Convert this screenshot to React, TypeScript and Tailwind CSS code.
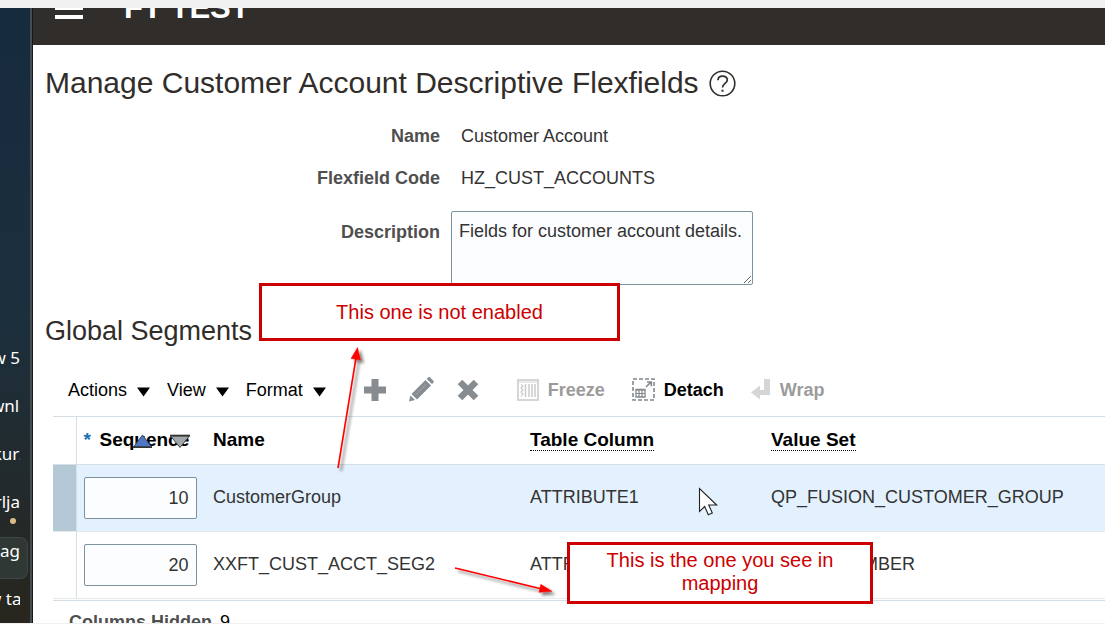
import { useState } from 'react';

const font = "font-['Liberation_Sans',Arial,sans-serif]";

const sideItems = [
  { label: 'ew 5', align: 'justify-end' },
  { label: 'ownloa', align: 'justify-center' },
  { label: 'kurz', align: 'justify-center' },
  { label: 'erlja', align: 'justify-end' },
];

const initialRows = [
  { seq: '10', name: 'CustomerGroup', column: 'ATTRIBUTE1', valueSet: 'QP_FUSION_CUSTOMER_GROUP' },
  { seq: '20', name: 'XXFT_CUST_ACCT_SEG2', column: 'ATTRIBUTE2', valueSet: 'FT_XX_NUMBER' },
];

const MenuButton = ({ label }: { label: string }) => (
  <button className="flex items-center gap-[10px] text-black">
    {label}
    <svg className="mt-1" width="13" height="10" viewBox="0 0 13 10">
      <path d="M0 0.5h13L6.5 9.5z" fill="#000" />
    </svg>
  </button>
);

const PlusIcon = () => (
  <svg width="22" height="22" viewBox="0 0 22 22">
    <path d="M7.5 0h7v7.5H22v7h-7.500V22h-7v-7.500H0v-7h7.500z" fill="#868c90" />
  </svg>
);

const PencilIcon = () => (
  <svg width="25" height="25" viewBox="0 0 25 25">
    <path d="M0 24.500l1.400-6 4.600 4.600z" fill="#868c90" />
    <path d="M2.500 17L16.500 3l5.500 5.500L8 22.500z" fill="#868c90" />
    <path d="M17.700 1.900L19.300.3q.8-.5 1.600 0l3.600 3.600q.6.800 0 1.600l-1.500 1.600z" fill="#868c90" />
    <path d="M7 17.500L17 7.500" stroke="#a4a9ac" strokeWidth="1" />
  </svg>
);

const DeleteIcon = () => (
  <svg width="22" height="22" viewBox="0 0 22 22">
    <path d="M3 3l16 16M19 3L3 19" stroke="#868c90" strokeWidth="6.500" />
  </svg>
);

const FreezeIcon = () => (
  <svg width="22" height="22" viewBox="0 0 22 22" fill="none">
    <path d="M1 1h20v20H1z" stroke="#d6d6d6" strokeWidth="2" />
    <path d="M2 3h18" stroke="#d6d6d6" />
    <path d="M4 5.500l2 1.500-2 2 2 2-2 2 2 2-2 2.500" stroke="#cacaca" strokeWidth="1.200" />
    <path d="M8.500 5v13M12 5v13M15 5v13M18 5v13" stroke="#cbcbcb" strokeWidth="1.500" />
  </svg>
);

const DetachIcon = () => (
  <svg width="23" height="23" viewBox="0 0 23 23" fill="none">
    <path d="M1 1h21v21H1z" stroke="#83898d" strokeWidth="1.600" strokeDasharray="4 2" />
    <path d="M4 11.500h9v7.500H4z" stroke="#83898d" strokeWidth="1.300" />
    <path d="M4 12h9M4 15.500h9M7 12v7M10 12v7" stroke="#83898d" strokeWidth="1.200" />
    <path d="M14 9l5-5M15 4h4.300v4.300" stroke="#83898d" strokeWidth="1.600" />
  </svg>
);

const WrapIcon = () => (
  <svg width="20" height="21" viewBox="0 0 20 21">
    <path d="M13 0h6v16H9v4.500L0 13.500 9 6.500V11h4z" fill="#d4d6d7" />
  </svg>
);

const HelpIcon = () => (
  <svg width="27" height="27" viewBox="0 0 27 27" fill="none" stroke="#312d2a">
    <circle cx="13.500" cy="13.500" r="12.300" strokeWidth="1.600" />
    <path d="M9 10.200c0-5.600 9.300-5.400 9.300-.3 0 3.600-4.800 3.400-4.800 7.600" strokeWidth="1.700" />
    <path d="M12.500 20.700h2" strokeWidth="2" />
  </svg>
);

const Sidebar = () => (
  <aside className="flex w-[33px] shrink-0 flex-col overflow-hidden border-r border-[#15191b] bg-linear-to-b from-[#172b3f] via-[#1b2f3d] to-[#28261e] font-['Noto_Sans',sans-serif] text-[17px] text-white">
    <div className="flex-1 border-r-2 border-[#454d50] pt-[326px]">
      {sideItems.map((item) => (
        <div key={item.label} className={`flex h-12 w-5 items-center overflow-hidden ${item.align}`}>
          <span className="whitespace-nowrap">{item.label}</span>
        </div>
      ))}
      <div className="relative w-7 pt-[11px]">
        <span className="absolute -top-2 left-[10px] size-[6px] rounded-full bg-[#d9bd84]" />
        <div className="h-[42px] rounded-r-lg border border-l-0 border-[#3f4644] bg-[#303836]">
          <div className="flex w-5 justify-end overflow-hidden leading-[26px]">
            <span>nag</span>
          </div>
        </div>
      </div>
      <div className="flex h-10 w-5 items-center justify-center overflow-hidden">
        <span className="whitespace-nowrap">w tab</span>
      </div>
    </div>
  </aside>
);

const SortButtons = () => (
  <span className="absolute top-[17px] left-[55px] flex gap-4">
    <button aria-label="Sort ascending">
      <svg width="21" height="15" viewBox="0 0 21 15">
        <path d="M10.500 1L19.500 13H1.500z" fill="#4f78c4" stroke="#3b4659" />
        <path d="M1 13.200h19" stroke="#333" strokeWidth="1.600" />
      </svg>
    </button>
    <button aria-label="Sort descending">
      <svg width="22" height="15" viewBox="0 0 22 15">
        <path d="M1.500 2h19L11 13.500z" fill="#a3a6a8" stroke="#444" />
        <path d="M1 1.500h20" stroke="#333" strokeWidth="1.600" />
      </svg>
    </button>
  </span>
);

const Annotations = () => (
  <>
    <svg className="pointer-events-none absolute top-0 left-0" width="760" height="624" viewBox="0 0 760 624">
      <defs>
        <filter id="shadow" x="-50%" y="-50%" width="200%" height="200%">
          <feDropShadow dx="3" dy="3" stdDeviation="1.500" floodColor="#000" floodOpacity="0.5" />
        </filter>
      </defs>
      <g filter="url(#shadow)" stroke="#f00" strokeWidth="1.600" fill="#f00">
        <path d="M338 468L356 358" />
        <path d="M357.500 347.500l3 12.500-9.500-1.500z" strokeWidth="0.500" />
        <path d="M455 568l87 21" />
        <path d="M552 591.300l-13 1 1.800-8z" strokeWidth="0.500" />
      </g>
      <path
        d="M699.500 488.500v23l5.200-5 3.600 8.200 4-1.800-3.600-7.900h8z"
        fill="#fff"
        stroke="#222"
        strokeWidth="1.100"
      />
    </svg>
    <div className="absolute top-[283px] left-[259px] flex h-[58px] w-[361px] items-center justify-center border-3 border-[#c00] bg-white text-xl text-[#c00]">
      This one is not enabled
    </div>
    <div className="absolute top-[542px] left-[567px] h-[62px] w-[306px] border-3 border-[#c00] bg-white px-7 pt-1 text-center text-xl leading-[23px] text-[#c00]">
      This is the one you see in mapping
    </div>
  </>
);

const App = () => {
  const [rows, setRows] = useState(initialRows);
  const [description, setDescription] = useState('Fields for customer account details.');

  const changeSeq = (index: number, value: string) => {
    setRows(rows.map((row, i) => (i === index ? { ...row, seq: value } : row)));
  };

  return (
    <div className={`relative flex h-screen flex-col overflow-hidden border-t-8 border-b border-[#f0f0f0] bg-white text-lg leading-6 text-[#333] ${font}`}>
      <div className="flex min-h-0 flex-1">
        <Sidebar />
        <div className="min-w-0 flex-1 overflow-hidden">
          <header className="flex h-[37px] items-end gap-[41px] overflow-hidden bg-[#312d2a] pl-[22px] text-white">
            <button aria-label="Menu" className="pb-[26px]">
              <svg width="28" height="22" viewBox="0 0 28 22" fill="#fff">
                <path d="M0 0h28v4H0zM0 9h28v4H0zM0 18h28v4H0z" />
              </svg>
            </button>
            <span className="pb-[19px] text-[31px] leading-9 font-bold">FT TEST</span>
          </header>

          <main className="pl-3">
            <div className="flex items-center gap-[10px] pt-5">
              <h1 className="text-3xl leading-9 text-[#312d2a]">Manage Customer Account Descriptive Flexfields</h1>
              <button aria-label="Help">
                <HelpIcon />
              </button>
            </div>

            <dl className="grid grid-cols-[395px_1fr] gap-x-[21px] gap-y-[18px] pt-[23px]">
              <dt className="text-right font-bold text-[#4f4f4f]">Name</dt>
              <dd>Customer Account</dd>
              <dt className="text-right font-bold text-[#4f4f4f]">Flexfield Code</dt>
              <dd>HZ_CUST_ACCOUNTS</dd>
            </dl>
            <div className="grid grid-cols-[395px_1fr] gap-x-[11px] pt-[21px]">
              <label htmlFor="description" className="pt-[9px] text-right font-bold text-[#4f4f4f]">
                Description
              </label>
              <textarea
                id="description"
                className="h-[74px] w-[302px] rounded-xs border border-[#7c929e] bg-[#fcfdfe] px-[7px] py-[7px]"
                value={description}
                onChange={(e) => setDescription(e.target.value)}
              />
            </div>

            <h2 className="pt-[30px] text-[27px] leading-8 text-[#312d2a]">Global Segments</h2>

            <div className="flex h-[69px] items-center pt-[17px] pb-px pl-[23px]">
              <div className="flex gap-[17px]">
                <MenuButton label="Actions" />
                <MenuButton label="View" />
                <MenuButton label="Format" />
              </div>
              <div className="flex items-center gap-[23px] pl-[38px]">
                <button aria-label="Add"><PlusIcon /></button>
                <button aria-label="Edit"><PencilIcon /></button>
                <button aria-label="Delete"><DeleteIcon /></button>
              </div>
              <div className="flex gap-[27px] pl-[38px] font-bold">
                <button className="flex items-center gap-[9px] text-[#9b9b9b]" disabled>
                  <FreezeIcon />
                  Freeze
                </button>
                <button className="flex items-center gap-[9px] text-black">
                  <DetachIcon />
                  Detach
                </button>
                <button className="flex items-center gap-[9px] text-[#9b9b9b]" disabled>
                  <WrapIcon />
                  Wrap
                </button>
              </div>
            </div>

            <div className="ml-2 border-b border-[#d6dfe6] pb-px">
              <table className="w-full table-fixed border-t border-[#d6dfe6]">
                <colgroup>
                  <col className="w-[23px]" />
                  <col className="w-[129px]" />
                  <col className="w-[317px]" />
                  <col className="w-[241px]" />
                  <col />
                </colgroup>
                <thead>
                  <tr className="h-12 border-b border-[#d6dfe6] text-left text-[19px] text-black">
                    <td className="border-r border-[#d6dfe6]" />
                    <th className="relative pb-[2px] pl-[7px]">
                      <span className="inline-block w-4 text-[#1b6fb5]">*</span>
                      Sequence
                      <SortButtons />
                    </th>
                    <th className="pb-[2px] pl-2">Name</th>
                    <th className="pb-[2px] pl-2">
                      <span className="border-b border-dotted border-black">Table Column</span>
                    </th>
                    <th className="pb-[2px] pl-2">
                      <span className="border-b border-dotted border-black">Value Set</span>
                    </th>
                  </tr>
                </thead>
                <tbody>
                  {rows.map((row, i) => (
                    <tr key={row.name} className={`h-[67px] border-b border-[#e4e9ed] ${i === 0 ? 'bg-[#e3f1fe]' : ''}`}>
                      <td className={`border-r border-[#d6dfe6] ${i === 0 ? 'bg-[#b5c8d6]' : ''}`} />
                      <td className="pl-[7px]">
                        <input
                          aria-label="Sequence"
                          className="block h-[42px] w-[113px] rounded-xs border border-[#7c929e] bg-[#fcfdfe] px-[7px] text-right"
                          value={row.seq}
                          onChange={(e) => changeSeq(i, e.target.value)}
                        />
                      </td>
                      <td className="pb-[2px] pl-2">{row.name}</td>
                      <td className="pb-[2px] pl-2">{row.column}</td>
                      <td className="pb-[2px] pl-2">{row.valueSet}</td>
                    </tr>
                  ))}
                </tbody>
              </table>
            </div>
            <div className="flex gap-2 pt-[9px] pl-6">
              <span className="font-bold text-[#4f4f4f]">Columns Hidden</span>
              <span className="text-black">9</span>
            </div>
          </main>
        </div>
      </div>
      <div className="absolute -top-2 left-0">
        <Annotations />
      </div>
    </div>
  );
};

export default App;
